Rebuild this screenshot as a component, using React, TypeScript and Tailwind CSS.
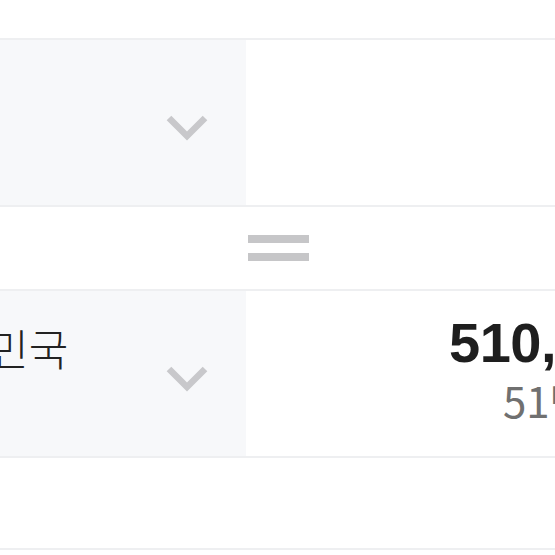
import React from "react";

function Chevron() {
    return (
        <svg width="42" height="28" viewBox="0 0 42 28" fill="none">
            <polyline points="3,4 21,22 39,4" stroke="#c8c8cb" strokeWidth="6.5" strokeLinecap="butt" strokeLinejoin="miter" />
        </svg>
    );
}

function Divider() {
    return <div className="h-[2px] w-full bg-[#eeeff1]" />;
}

export default function App() {
    return (
        <div className="w-[555px] h-[555px] overflow-hidden bg-white font-['Liberation_Sans','Noto_Sans_CJK_KR',sans-serif]">
            <div className="h-[38px]" />
            <Divider />

            <div className="flex h-[165px]">
                <div className="w-[246px] shrink-0 bg-[#f7f8fa] flex items-center justify-end pr-[38px] pt-[10px]">
                    <Chevron />
                </div>
                <div className="flex-1 bg-white" />
            </div>
            <Divider />

            <div className="h-[82px] flex flex-col items-center justify-center gap-[10px] pl-[1px]">
                <div className="w-[61px] h-[8px] bg-[#c6c6c8]" />
                <div className="w-[61px] h-[8px] bg-[#c6c6c8]" />
            </div>
            <Divider />

            <div className="flex h-[165px]">
                <div className="w-[246px] shrink-0 bg-[#f7f8fa] relative flex items-center justify-end pr-[38px] pt-[10px]">
                    <span className="absolute left-[-90px] top-[26px] whitespace-nowrap text-[43px] leading-[60px] text-[#222] font-['Noto_Sans_CJK_KR',sans-serif] font-light">
                        대한민국
                    </span>
                    <Chevron />
                </div>
                <div className="flex-1 min-w-0 bg-white relative">
                    <div className="absolute left-[203px] top-[22px] flex flex-col items-start gap-[2px] whitespace-nowrap">
                        <span className="text-[56px] leading-[60px] font-bold text-[#1e1e1e] tracking-[-0.5px]">510,000원</span>
                        <span className="ml-[54px] text-[42px] leading-[50px] text-[#707070] font-['Liberation_Sans_Narrow','Noto_Sans_CJK_KR',sans-serif]">51만원</span>
                    </div>
                </div>
            </div>
            <Divider />

            <div className="h-[90px]" />
            <Divider />
        </div>
    );
}
